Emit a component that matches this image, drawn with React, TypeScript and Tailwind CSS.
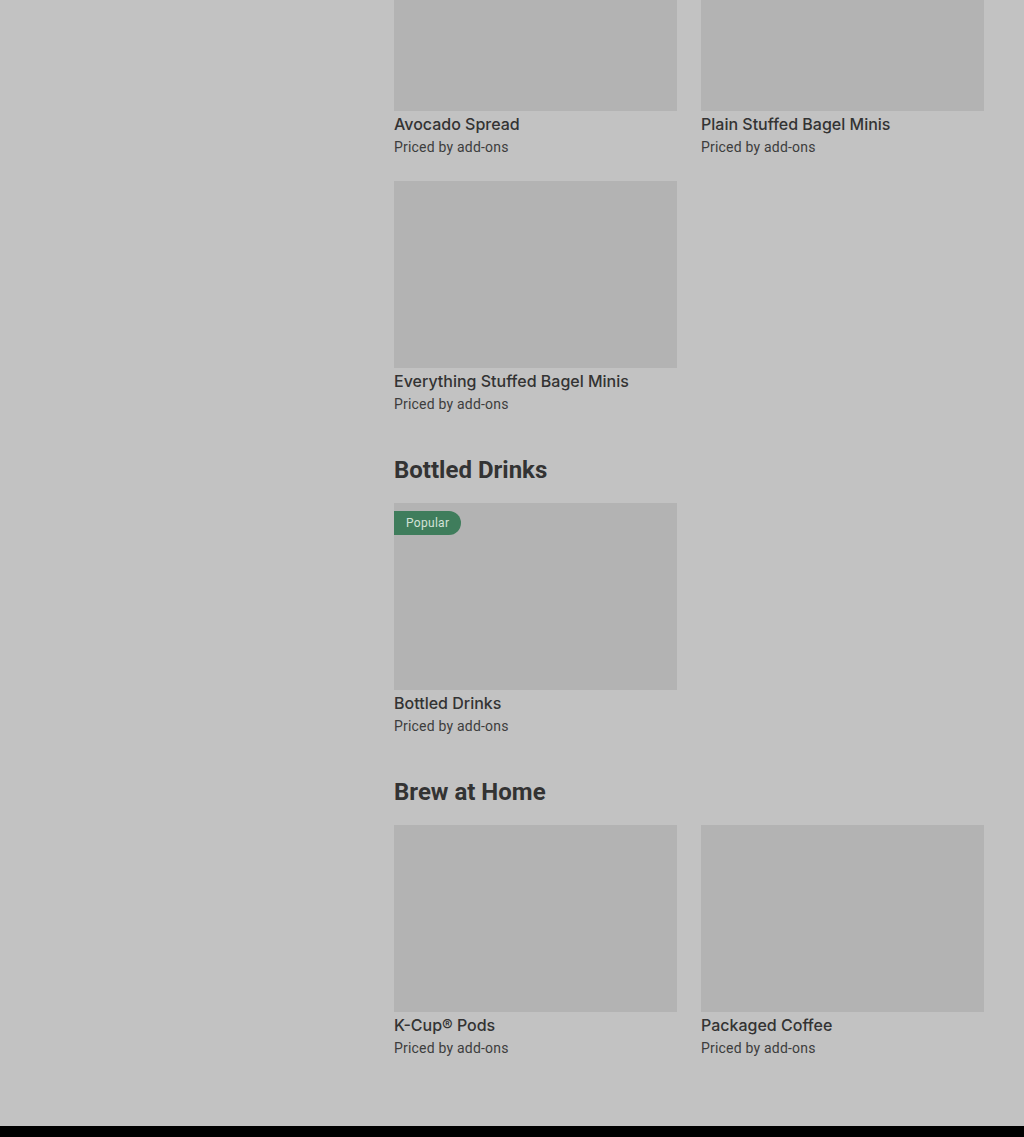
import React from "react";

type Item = { name: string; popular?: boolean };

function Card({ item }: { item: Item }) {
  return (
    <div className="flex flex-col">
      <div className="relative h-[187px] bg-[#b3b3b3]">
        {item.popular && (
          <span className="absolute left-0 top-[8px] flex h-[24px] items-center rounded-r-full bg-[#3f7d5c] pl-[12px] pr-[12px] text-[12px] tracking-[0.3px] text-[#d3e2d8]">
            Popular
          </span>
        )}
      </div>
      <div className="mt-[1px] font-['Inter',sans-serif] text-[16px] leading-[24px] font-medium text-[#333333]">{item.name}</div>
      <div className="pt-[1px] text-[14px] leading-[20px] tracking-[0.2px] text-[#3d3d3d]">Priced by add-ons</div>
    </div>
  );
}

function Grid({ items }: { items: Item[] }) {
  return (
    <div className="grid grid-cols-2 gap-x-[24px] gap-y-[24px]">
      {items.map((it) => (
        <Card key={it.name} item={it} />
      ))}
    </div>
  );
}

export default function App() {
  return (
    <div className="min-h-[1137px] w-[1024px] bg-[#c2c2c2] font-['Roboto',sans-serif] overflow-hidden flex flex-col">
      <div className="flex flex-1">
        <div className="w-[394px] shrink-0" />
        <div className="w-[590px] -mt-[76px] pb-[64px]">
          <Grid
            items={[
              { name: "Avocado Spread" },
              { name: "Plain Stuffed Bagel Minis" },
              { name: "Everything Stuffed Bagel Minis" },
            ]}
          />
          <h2 className="mt-[40px] mb-[17px] text-[24px] leading-[32px] font-bold text-[#333333]">Bottled Drinks</h2>
          <Grid items={[{ name: "Bottled Drinks", popular: true }]} />
          <h2 className="mt-[40px] mb-[17px] text-[24px] leading-[32px] font-bold text-[#333333]">Brew at Home</h2>
          <Grid items={[{ name: "K-Cup® Pods" }, { name: "Packaged Coffee" }]} />
        </div>
      </div>
      <div className="h-[11px] bg-black" />
    </div>
  );
}
